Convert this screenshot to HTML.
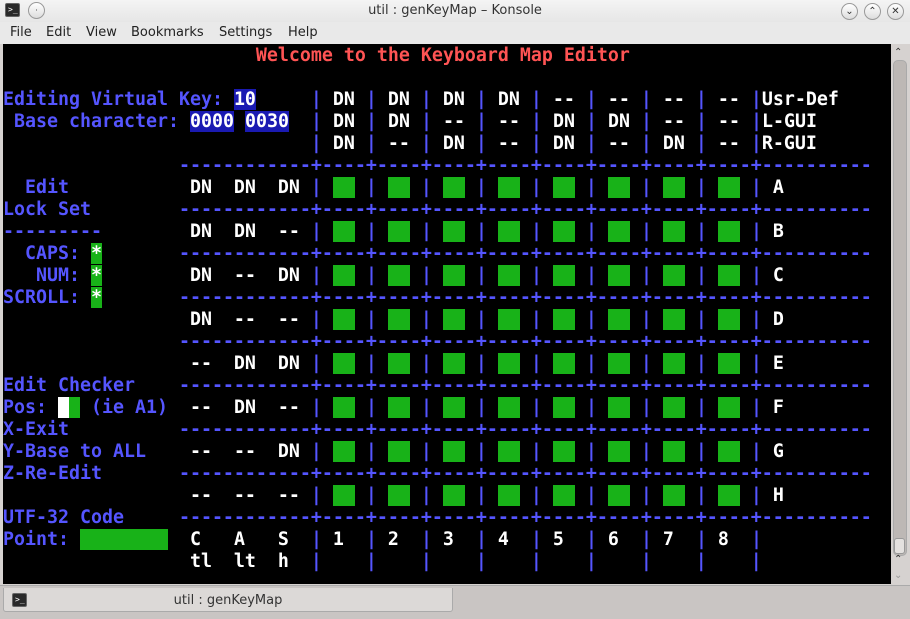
<!DOCTYPE html>
<html><head><meta charset="utf-8"><style>
*{margin:0;padding:0;box-sizing:border-box}
body{width:910px;height:619px;overflow:hidden;background:#d6d2d0;font-family:"DejaVu Sans","Liberation Sans",sans-serif;position:relative}
#title{position:absolute;left:0;top:0;width:910px;height:22px;background:linear-gradient(#f4f4f4,#e6e6e6);}
#title .t{position:absolute;left:0;right:0;top:3px;text-align:center;font-size:13px;color:#333}
#menu{position:absolute;left:0;top:22px;width:910px;height:22px;background:#e9e9e9;font-size:13px;color:#222}
#menu span{position:absolute;top:3px}
#term{position:absolute;left:3px;top:44px;width:888px;height:540px;background:#000;overflow:hidden}
pre{position:absolute;left:0;top:1px;font-family:"DejaVu Sans Mono",monospace;font-weight:bold;font-size:18.27px;line-height:22px;color:#fff;white-space:pre}
.b{color:#5555ff}.r{color:#ff5454}.h{background:#1a1ab2;color:#fff}.g{background:#18b218}.wb{background:#fff}.gs{background:#18b218;color:#fff}
#sb{position:absolute;left:891px;top:44px;width:19px;height:541px;background:#d6d2d0}
#tabbar{position:absolute;left:0;top:585px;width:910px;height:34px;background:#c9c5c3;border-top:1px solid #aaa}
#tab{position:absolute;left:3px;top:2px;width:450px;height:24px;background:#dcd9d7;border:1px solid #aaa;border-top:none;border-radius:0 0 3px 3px}
.icon{position:absolute;width:15px;height:14px;background:#2a2a2a;border-radius:2px;border:1px solid #666;color:#fff;font-size:8px;line-height:12px;padding-left:2px;font-family:"DejaVu Sans Mono",monospace}
.cb{position:absolute;top:3px;width:17px;height:17px;border-radius:50%;border:1px solid #999;background:linear-gradient(#fff,#ddd);font-size:10px;text-align:center;line-height:15px;color:#333}
</style></head><body>
<div id="title">
<div class="icon" style="left:5px;top:3px">&gt;_</div>
<div class="cb" style="left:28px;top:2px;font-size:8px">·</div>
<div class="t">util : genKeyMap – Konsole</div>
<div class="cb" style="left:841px">⌄</div>
<div class="cb" style="left:864px">⌃</div>
<div class="cb" style="left:887px">✕</div>
</div>
<div id="menu"><span style="left:10px">File</span><span style="left:46px">Edit</span><span style="left:86px">View</span><span style="left:131px">Bookmarks</span><span style="left:219px">Settings</span><span style="left:288px">Help</span></div>
<div id="term"><pre><span class="r">                       Welcome to the Keyboard Map Editor</span>

<span class="b">Editing Virtual Key: </span><span class="h">10</span>     <span class="b">|</span> DN <span class="b">|</span> DN <span class="b">|</span> DN <span class="b">|</span> DN <span class="b">|</span> -- <span class="b">|</span> -- <span class="b">|</span> -- <span class="b">|</span> -- <span class="b">|</span>Usr-Def
<span class="b"> Base character: </span><span class="h">0000</span> <span class="h">0030</span>  <span class="b">|</span> DN <span class="b">|</span> DN <span class="b">|</span> -- <span class="b">|</span> -- <span class="b">|</span> DN <span class="b">|</span> DN <span class="b">|</span> -- <span class="b">|</span> -- <span class="b">|</span>L-GUI
                            <span class="b">|</span> DN <span class="b">|</span> -- <span class="b">|</span> DN <span class="b">|</span> -- <span class="b">|</span> DN <span class="b">|</span> -- <span class="b">|</span> DN <span class="b">|</span> -- <span class="b">|</span>R-GUI
<span class="b">                ------------+----+----+----+----+----+----+----+----+----------</span>
<span class="b">  Edit</span>           DN  DN  DN <span class="b">|</span> <span class="g">  </span> <span class="b">|</span> <span class="g">  </span> <span class="b">|</span> <span class="g">  </span> <span class="b">|</span> <span class="g">  </span> <span class="b">|</span> <span class="g">  </span> <span class="b">|</span> <span class="g">  </span> <span class="b">|</span> <span class="g">  </span> <span class="b">|</span> <span class="g">  </span> <span class="b">|</span> A
<span class="b">Lock Set        ------------+----+----+----+----+----+----+----+----+----------</span>
<span class="b">---------</span>        DN  DN  -- <span class="b">|</span> <span class="g">  </span> <span class="b">|</span> <span class="g">  </span> <span class="b">|</span> <span class="g">  </span> <span class="b">|</span> <span class="g">  </span> <span class="b">|</span> <span class="g">  </span> <span class="b">|</span> <span class="g">  </span> <span class="b">|</span> <span class="g">  </span> <span class="b">|</span> <span class="g">  </span> <span class="b">|</span> B
<span class="b">  CAPS: </span><span class="gs">*</span><span class="b">       ------------+----+----+----+----+----+----+----+----+----------</span>
<span class="b">   NUM: </span><span class="gs">*</span>        DN  --  DN <span class="b">|</span> <span class="g">  </span> <span class="b">|</span> <span class="g">  </span> <span class="b">|</span> <span class="g">  </span> <span class="b">|</span> <span class="g">  </span> <span class="b">|</span> <span class="g">  </span> <span class="b">|</span> <span class="g">  </span> <span class="b">|</span> <span class="g">  </span> <span class="b">|</span> <span class="g">  </span> <span class="b">|</span> C
<span class="b">SCROLL: </span><span class="gs">*</span><span class="b">       ------------+----+----+----+----+----+----+----+----+----------</span>
                 DN  --  -- <span class="b">|</span> <span class="g">  </span> <span class="b">|</span> <span class="g">  </span> <span class="b">|</span> <span class="g">  </span> <span class="b">|</span> <span class="g">  </span> <span class="b">|</span> <span class="g">  </span> <span class="b">|</span> <span class="g">  </span> <span class="b">|</span> <span class="g">  </span> <span class="b">|</span> <span class="g">  </span> <span class="b">|</span> D
<span class="b">                ------------+----+----+----+----+----+----+----+----+----------</span>
                 --  DN  DN <span class="b">|</span> <span class="g">  </span> <span class="b">|</span> <span class="g">  </span> <span class="b">|</span> <span class="g">  </span> <span class="b">|</span> <span class="g">  </span> <span class="b">|</span> <span class="g">  </span> <span class="b">|</span> <span class="g">  </span> <span class="b">|</span> <span class="g">  </span> <span class="b">|</span> <span class="g">  </span> <span class="b">|</span> E
<span class="b">Edit Checker    ------------+----+----+----+----+----+----+----+----+----------</span>
<span class="b">Pos: </span><span class="wb"> </span><span class="g"> </span><span class="b"> (ie A1)</span>  --  DN  -- <span class="b">|</span> <span class="g">  </span> <span class="b">|</span> <span class="g">  </span> <span class="b">|</span> <span class="g">  </span> <span class="b">|</span> <span class="g">  </span> <span class="b">|</span> <span class="g">  </span> <span class="b">|</span> <span class="g">  </span> <span class="b">|</span> <span class="g">  </span> <span class="b">|</span> <span class="g">  </span> <span class="b">|</span> F
<span class="b">X-Exit          ------------+----+----+----+----+----+----+----+----+----------</span>
<span class="b">Y-Base to ALL</span>    --  --  DN <span class="b">|</span> <span class="g">  </span> <span class="b">|</span> <span class="g">  </span> <span class="b">|</span> <span class="g">  </span> <span class="b">|</span> <span class="g">  </span> <span class="b">|</span> <span class="g">  </span> <span class="b">|</span> <span class="g">  </span> <span class="b">|</span> <span class="g">  </span> <span class="b">|</span> <span class="g">  </span> <span class="b">|</span> G
<span class="b">Z-Re-Edit       ------------+----+----+----+----+----+----+----+----+----------</span>
                 --  --  -- <span class="b">|</span> <span class="g">  </span> <span class="b">|</span> <span class="g">  </span> <span class="b">|</span> <span class="g">  </span> <span class="b">|</span> <span class="g">  </span> <span class="b">|</span> <span class="g">  </span> <span class="b">|</span> <span class="g">  </span> <span class="b">|</span> <span class="g">  </span> <span class="b">|</span> <span class="g">  </span> <span class="b">|</span> H
<span class="b">UTF-32 Code     ------------+----+----+----+----+----+----+----+----+----------</span>
<span class="b">Point: </span><span class="g">        </span>  C   A   S  <span class="b">|</span> 1  <span class="b">|</span> 2  <span class="b">|</span> 3  <span class="b">|</span> 4  <span class="b">|</span> 5  <span class="b">|</span> 6  <span class="b">|</span> 7  <span class="b">|</span> 8  <span class="b">|</span>
                 tl  lt  h  <span class="b">|    |    |    |    |    |    |    |    |</span>
</pre></div>
<div id="sb">
<div style="position:absolute;left:3px;top:3px;font-size:10px;color:#333">⌃</div>
<div style="position:absolute;left:2px;top:16px;width:14px;height:496px;background:#bdb8b5;border-radius:5px;border:1px solid #aaa"></div>
<div style="position:absolute;left:3px;top:494px;width:11px;height:16px;background:#e4e1df;border:1px solid #999;border-radius:3px"></div>
<div style="position:absolute;left:3px;top:510px;font-size:10px;color:#333">⌃</div>
<div style="position:absolute;left:3px;top:526px;font-size:10px;color:#999">⌄</div>
</div>
<div id="tabbar"><div id="tab">
<div class="icon" style="left:8px;top:5px">&gt;_</div>
<div style="position:absolute;left:0;right:0;top:5px;text-align:center;font-size:13px;color:#333">util : genKeyMap</div>
</div></div>
</body></html>
